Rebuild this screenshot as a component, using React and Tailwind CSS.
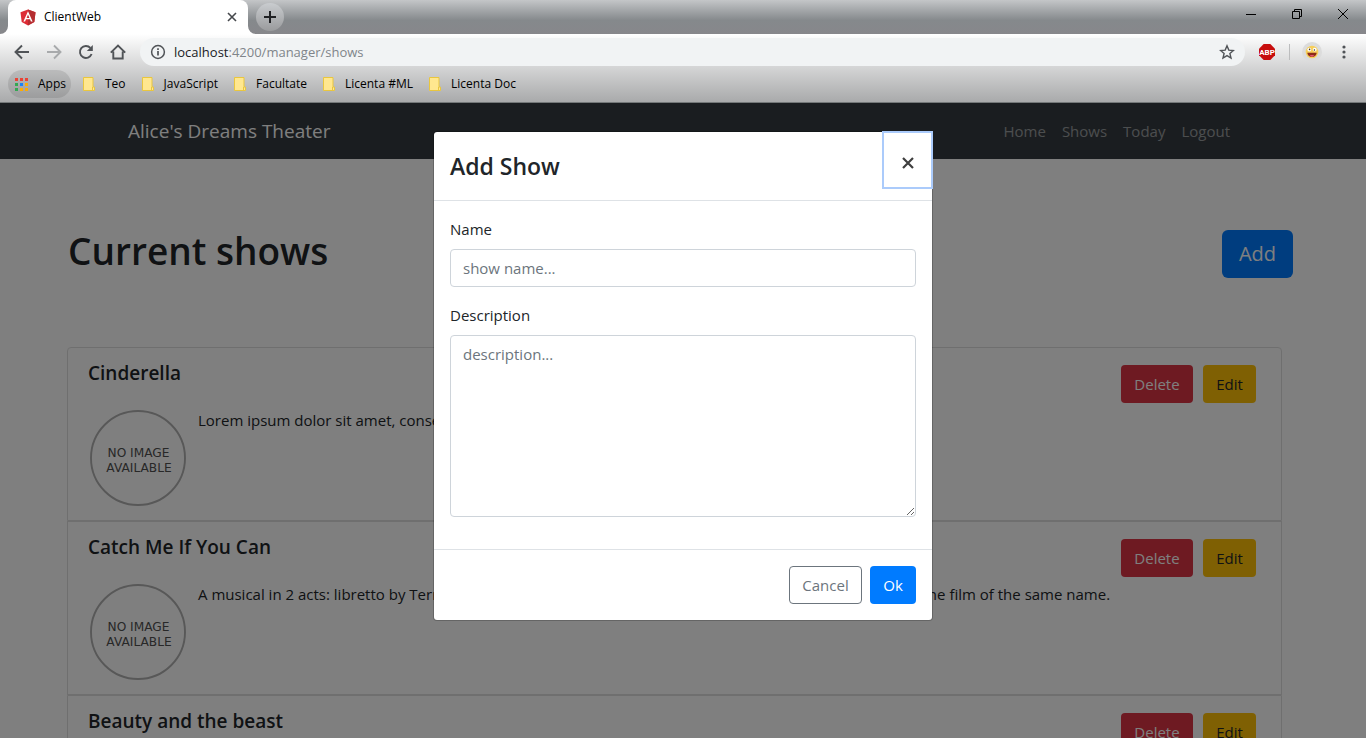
import React from "react";

const shows = [
  { title: "Cinderella", text: "Lorem ipsum dolor sit amet, consectetur adipiscing elit." },
  {
    title: "Catch Me If You Can",
    text: "A musical in 2 acts: libretto by Terrence McNally, a score by Marc Shaiman and Scott Wittman, based on the film of the same name.",
  },
  { title: "Beauty and the beast", text: "" },
];

const bookmarks = ["Teo", "JavaScript", "Facultate", "Licenta #ML", "Licenta Doc"];

function AngularLogo() {
  return (
    <svg viewBox="0 0 16 17" className="h-[17px] w-4 shrink-0" aria-hidden="true">
      <path d="M8 0.5 0.5 3.2 1.7 13 8 16.5 14.3 13 15.5 3.2z" fill="#dd2c35" />
      <path d="M8 0.5v16l6.3-3.5 1.2-9.8z" fill="#b52e31" />
      <path d="M8 2.3 3.4 12.6h1.7l0.9-2.3h4l0.9 2.3h1.7zM8 5.5l1.4 3.4H6.6z" fill="#fff" />
    </svg>
  );
}

function Icon({ children, className = "" }) {
  return (
    <svg viewBox="0 0 16 16" className={"size-4 shrink-0 " + className} fill="none" stroke="currentColor" aria-hidden="true">
      {children}
    </svg>
  );
}

function TabStrip() {
  return (
    <div className="flex h-[34px] justify-between bg-linear-to-b from-[#c4c6c8] via-[#85898c] via-60% to-[#87878b] pl-2">
      <div className="flex">
        <div className="relative flex w-60 items-center gap-2 rounded-t-lg bg-white pr-2 pl-3">
          <svg viewBox="0 0 8 8" className="absolute bottom-0 -left-2 size-2" aria-hidden="true">
            <path d="M8 0v8H0a8 8 0 0 0 8-8" fill="#fff" />
          </svg>
          <svg viewBox="0 0 8 8" className="absolute -right-2 bottom-0 size-2" aria-hidden="true">
            <path d="M0 0v8h8a8 8 0 0 1-8-8" fill="#fff" />
          </svg>
          <AngularLogo />
          <span className="flex-1 text-xs text-black">ClientWeb</span>
          <button type="button" aria-label="Close tab" className="text-[#45484c]">
            <Icon>
              <path d="M4 4l8 8M12 4l-8 8" strokeWidth="1.6" />
            </Icon>
          </button>
        </div>
        <button
          type="button"
          aria-label="New tab"
          className="mt-[3px] ml-2 flex size-7 items-center justify-center rounded-full bg-linear-to-b from-[#c9cccf] to-[#9a9b9d] text-[#202124]"
        >
          <Icon>
            <path d="M8 2v12M2 8h12" strokeWidth="2" />
          </Icon>
        </button>
      </div>
      <div className="flex text-black">
        <button type="button" aria-label="Minimize" className="flex h-7 w-[46px] items-center justify-center">
          <svg viewBox="0 0 10 10" className="size-[10px]" stroke="currentColor" aria-hidden="true">
            <path d="M0 5.5h10" />
          </svg>
        </button>
        <button type="button" aria-label="Restore" className="flex h-7 w-[46px] items-center justify-center">
          <svg viewBox="0 0 10 10" className="size-[10px]" fill="none" stroke="currentColor" aria-hidden="true">
            <path d="M0.5 2.5h7v7h-7zM2.5 2.5v-2h7v7h-2" />
          </svg>
        </button>
        <button type="button" aria-label="Close window" className="flex h-7 w-[46px] items-center justify-center">
          <svg viewBox="0 0 10 10" className="size-[10px]" stroke="currentColor" aria-hidden="true">
            <path d="M0 0l10 10M10 0L0 10" />
          </svg>
        </button>
      </div>
    </div>
  );
}

function Toolbar() {
  return (
    <div className="flex h-9 items-center pr-[14px] pl-[14px] text-[#505357]">
      <div className="flex items-center gap-4">
        <button type="button" aria-label="Back">
          <Icon><path d="M15 8H2M8 1.5 1.5 8 8 14.5" strokeWidth="1.9" /></Icon>
        </button>
        <button type="button" aria-label="Forward" className="text-[#a8aaac]">
          <Icon><path d="M1 8h13M8 1.5 14.5 8 8 14.5" strokeWidth="1.9" /></Icon>
        </button>
        <button type="button" aria-label="Reload">
          <Icon>
            <path d="M13.6 10A6 6 0 1 1 12.4 3.9" strokeWidth="1.9" />
            <path d="M14.8 1v6H8.8z" fill="currentColor" stroke="none" />
          </Icon>
        </button>
        <button type="button" aria-label="Home">
          <Icon><path d="M0.8 8.6 8 1.5l7.2 7.1M3.3 7.5v7h9.4v-7" strokeWidth="1.9" /></Icon>
        </button>
      </div>
      <div className="ml-[14px] flex h-7 min-w-0 flex-1 items-center gap-2 rounded-full bg-[#f1f3f4] pr-[10px] pl-[10px]">
        <Icon>
          <circle cx="8" cy="8" r="6.4" strokeWidth="1.5" />
          <path d="M8 7v4.5M8 4.2v1.7" strokeWidth="1.7" />
        </Icon>
        <div className="flex-1 text-[13px] leading-5 text-[#80858a]">
          <span className="text-[#202124]">localhost</span>:4200/manager/shows
        </div>
        <button type="button" aria-label="Bookmark this page">
          <Icon>
            <path d="M8 1.8l1.8 4.3 4.6.4-3.5 3 1.1 4.5L8 11.6 4 14l1.1-4.5-3.5-3 4.6-.4z" strokeWidth="1.4" />
          </Icon>
        </button>
      </div>
      <button type="button" aria-label="AdBlock Plus" className="ml-[14px]">
        <svg viewBox="0 0 16 16" className="size-4" aria-hidden="true">
          <path d="M4.7 0h6.6L16 4.7v6.6L11.3 16H4.7L0 11.3V4.7z" fill="#c70d0d" />
          <text x="8" y="10.9" textAnchor="middle" fontSize="8" fontWeight="700" fill="#fff" fontFamily="Roboto, sans-serif">ABP</text>
        </svg>
      </button>
      <div className="mr-3 ml-[14px] h-4 w-px bg-[#bcbdbe]" />
      <button type="button" aria-label="Profile" className="flex size-5 items-center justify-center rounded-full bg-[#dcdcdc]">
        <svg viewBox="0 0 14 14" className="size-[14px]" aria-hidden="true">
          <circle cx="7" cy="7" r="6.3" fill="#f7cf5b" />
          <circle cx="4.3" cy="4.6" r="1.9" fill="#fff" />
          <circle cx="9.7" cy="4.6" r="1.9" fill="#fff" />
          <circle cx="4.6" cy="4.4" r="0.8" fill="#4a3820" />
          <circle cx="9.4" cy="5" r="0.8" fill="#4a3820" />
          <path d="M2.3 7.8h9.4a4.7 4 0 0 1-9.4 0" fill="#8d2c18" />
          <path d="M4.5 10.6a3 1.6 0 0 1 5 0 4 4 0 0 1-5 0" fill="#f0567a" />
        </svg>
      </button>
      <button type="button" aria-label="Menu" className="ml-[14px]">
        <Icon>
          <g fill="currentColor" stroke="none">
            <circle cx="8" cy="3" r="1.6" />
            <circle cx="8" cy="8" r="1.6" />
            <circle cx="8" cy="13" r="1.6" />
          </g>
        </Icon>
      </button>
    </div>
  );
}

function BookmarksBar() {
  return (
    <nav aria-label="Bookmarks" className="flex h-8 items-center pb-1 pl-2 text-xs text-black">
      <a href="#apps" className="flex h-7 items-center gap-[10px] rounded-full bg-black/10 pr-[5px] pl-[7px]">
        <svg viewBox="0 0 13 13" className="size-[13px]" aria-hidden="true">
          <path d="M0 0h3v3H0zM5 0h3v3H5zM10 0h3v3h-3z" fill="#ea4335" />
          <path d="M0 5h3v3H0zM0 10h3v3H0z" fill="#34a853" />
          <path d="M5 5h3v3H5z" fill="#1a82f7" />
          <path d="M10 5h3v3h-3zM5 10h3v3H5zM10 10h3v3h-3z" fill="#fbab05" />
        </svg>
        Apps
      </a>
      <div className="ml-3 flex gap-4">
        {bookmarks.map((name) => (
          <a key={name} href="#bookmark" className="flex items-center gap-[10px]">
            <svg viewBox="0 0 12 14" className="h-[14px] w-3" aria-hidden="true">
              <path d="M0.5 0.5h9.5v9.5h1.5v3.5H0.5z" fill="#ffe78f" stroke="#e9c63f" />
              <path d="M9.5 10v3.5" stroke="#e9c63f" />
            </svg>
            {name}
          </a>
        ))}
      </div>
    </nav>
  );
}

function NoImage() {
  return (
    <svg viewBox="0 0 100 100" role="img" aria-label="No image available" className="size-[100px] shrink-0">
      <circle cx="50" cy="50" r="47" fill="none" stroke="#b0b0b0" strokeWidth="1.9" />
      <g fontSize="12.2" fill="#505050" textAnchor="middle" fontFamily="'DejaVu Sans', sans-serif">
        <text x="50.5" y="49">NO IMAGE</text>
        <text x="51" y="63.5">AVAILABLE</text>
      </g>
    </svg>
  );
}

function ShowCard({ show }) {
  return (
    <li className="flex h-[174px] items-start justify-between border border-[#dfdfdf] pr-[25px] pl-5 first:rounded-t last:rounded-b">
      <div className="min-w-0 flex-1">
        <h2 className="mt-[13px] text-[19px] leading-6 font-semibold">{show.title}</h2>
        <div className="mt-[23px] flex items-start gap-[10px]">
          <NoImage />
          <p className="text-[15px] leading-6">{show.text}</p>
        </div>
      </div>
      <div className="mt-[17px] flex shrink-0 gap-[10px] text-[15px]">
        <button type="button" className="h-[38px] w-[72px] rounded bg-[#dc3545] text-white">Delete</button>
        <button type="button" className="h-[38px] w-[53px] rounded bg-[#ffc107]">Edit</button>
      </div>
    </li>
  );
}

function AddShowDialog() {
  return (
    <div className="absolute inset-0 flex items-start justify-center bg-black/50 pt-7">
      <div
        role="dialog"
        aria-labelledby="dialog-title"
        className="w-full max-w-[500px] rounded border border-black/20 bg-white bg-clip-padding"
      >
        <header className="flex h-[69px] items-start justify-between border-b border-[#dee2e6] pl-4">
          <h2 id="dialog-title" className="mt-4 text-[23px] leading-9 font-semibold">Add Show</h2>
          <button
            type="button"
            aria-label="Close"
            className="flex h-14 w-[49px] items-center justify-center pt-[6px] text-[#3f3f3f] outline-2 -outline-offset-1 outline-[#abcbfb]"
          >
            <svg viewBox="0 0 12 12" className="size-3" stroke="currentColor" strokeWidth="2.2" aria-hidden="true">
              <path d="M1 1l10 10M11 1L1 11" />
            </svg>
          </button>
        </header>
        <form className="px-4 pt-4 pb-8 text-[15px] leading-6">
          <label htmlFor="show-name" className="block">Name</label>
          <input
            id="show-name"
            placeholder="show name..."
            className="mt-2 block h-[38px] w-full rounded border border-[#ced4da] px-3 placeholder:text-[#6c757d]"
          />
          <label htmlFor="show-description" className="mt-4 block">Description</label>
          <textarea
            id="show-description"
            placeholder="description..."
            className="mt-2 block h-[182px] w-full rounded border border-[#ced4da] px-3 py-[6px] placeholder:text-[#6c757d]"
          />
        </form>
        <footer className="flex justify-end gap-2 border-t border-[#dee2e6] p-4 text-[15px]">
          <button type="button" className="h-[38px] w-[73px] rounded border border-[#6c757d] text-[#6c757d]">Cancel</button>
          <button type="button" className="h-[38px] w-[46px] rounded bg-[#007bff] text-white">Ok</button>
        </footer>
      </div>
    </div>
  );
}

export default function App() {
  return (
    <div className="flex h-screen flex-col overflow-hidden font-['Open_Sans','Noto_Sans',sans-serif]">
      <header>
        <TabStrip />
        <div className="border-b border-[#747879] bg-linear-to-b from-white to-[#a9aaab]">
          <Toolbar />
          <BookmarksBar />
        </div>
      </header>
      <div className="relative flex-1 overflow-hidden bg-white text-[#212529]">
        <nav className="flex h-14 items-center justify-between bg-[#343a40] pr-[136px] pl-32">
          <a href="#home" className="text-[19px] text-white">Alice's Dreams Theater</a>
          <div className="flex gap-4 text-[15px] text-white/50">
            <a href="#home">Home</a>
            <a href="#shows">Shows</a>
            <a href="#today">Today</a>
            <a href="#logout">Logout</a>
          </div>
        </nav>
        <main>
          <div className="flex items-start justify-between pt-[68px] pr-[73px] pl-[68px]">
            <h1 className="text-[37px] leading-12 font-semibold">Current shows</h1>
            <button type="button" className="mt-[3px] h-12 w-[71px] rounded-md bg-[#007bff] text-xl text-white">Add</button>
          </div>
          <ul className="mt-[69px] mr-[84px] ml-[67px]">
            {shows.map((show) => (
              <ShowCard key={show.title} show={show} />
            ))}
          </ul>
        </main>
        <AddShowDialog />
      </div>
    </div>
  );
}
